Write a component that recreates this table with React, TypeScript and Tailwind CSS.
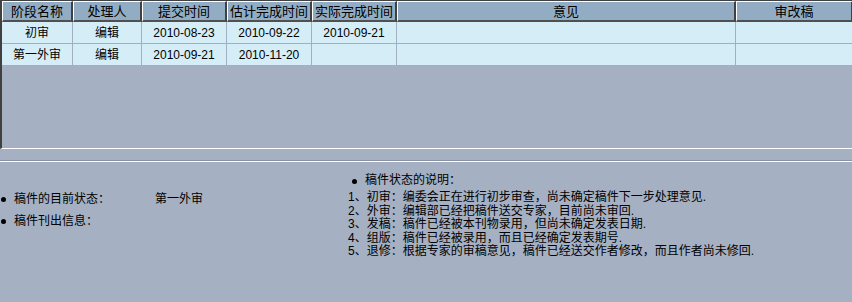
const cols = ['阶段名称', '处理人', '提交时间', '估计完成时间', '实际完成时间', '意见', '审改稿']

const rows = [
  ['初审', '编辑', '2010-08-23', '2010-09-22', '2010-09-21', '', ''],
  ['第一外审', '编辑', '2010-09-21', '2010-11-20', '', '', ''],
]

const notes = [
  '1、初审：编委会正在进行初步审查，尚未确定稿件下一步处理意见.',
  '2、外审：编辑部已经把稿件送交专家，目前尚未审回.',
  '3、发稿：稿件已经被本刊物录用，但尚未确定发表日期.',
  '4、组版：稿件已经被录用，而且已经确定发表期号.',
  '5、退修：根据专家的审稿意见，稿件已经送交作者修改，而且作者尚未修回.',
]

const grid = 'grid grid-cols-[71px_69px_85px_85px_85px_339px_117px]'

function Dot() {
  return <span className="inline-block w-[5px] h-[5px] rounded-full bg-black" />
}

export default function App() {
  return (
    <div
      className="w-[852px] h-[302px] bg-[#a5b0c3] text-black text-[12px] overflow-hidden"
      style={{ fontFamily: '"Liberation Sans", "Noto Sans CJK SC", sans-serif' }}
    >
      {/* sunken frame holding the stage table */}
      <div className="h-[149px] border-t border-l-2 border-t-[#404040] border-l-[#404040] border-b border-b-white">
        <div className={grid}>
          {cols.map((c) => (
            <div
              key={c}
              className="h-[21px] flex items-center justify-center bg-[#92adc3] border-t border-l border-t-white border-l-white border-r-2 border-b-2 border-r-[#404040] border-b-[#505050] text-[13px] leading-none"
            >
              {c}
            </div>
          ))}
        </div>
        {rows.map((r, i) => (
          <div key={i} className={grid}>
            {r.map((v, j) => (
              <div
                key={j}
                className="h-[22px] flex items-center justify-center bg-[#d5edf7] border-r border-b border-[#9fb1c1]"
              >
                {v}
              </div>
            ))}
          </div>
        ))}
      </div>

      <div className="h-[11px]" />
      <div className="border-t border-t-[#8a93a3] border-b border-b-white" />

      <div className="flex">
        <div className="w-[346px] pt-[26px]">
          <div className="h-[22px] flex items-center">
            <div className="w-[14px] pl-[1px] flex items-center">
              <Dot />
            </div>
            <span className="w-[141px]">稿件的目前状态：</span>
            <span>第一外审</span>
          </div>
          <div className="h-[22px] flex items-center">
            <div className="w-[14px] pl-[1px] flex items-center">
              <Dot />
            </div>
            <span>稿件刊出信息：</span>
          </div>
        </div>
        <div className="pt-[11px] pl-[2px] leading-[13.5px]">
          <div className="flex items-center h-[16px] mb-[2px]">
            <div className="w-[17px] pl-[4px] flex items-center">
              <Dot />
            </div>
            <span>稿件状态的说明：</span>
          </div>
          {notes.map((n) => (
            <div key={n}>{n}</div>
          ))}
        </div>
      </div>
    </div>
  )
}
